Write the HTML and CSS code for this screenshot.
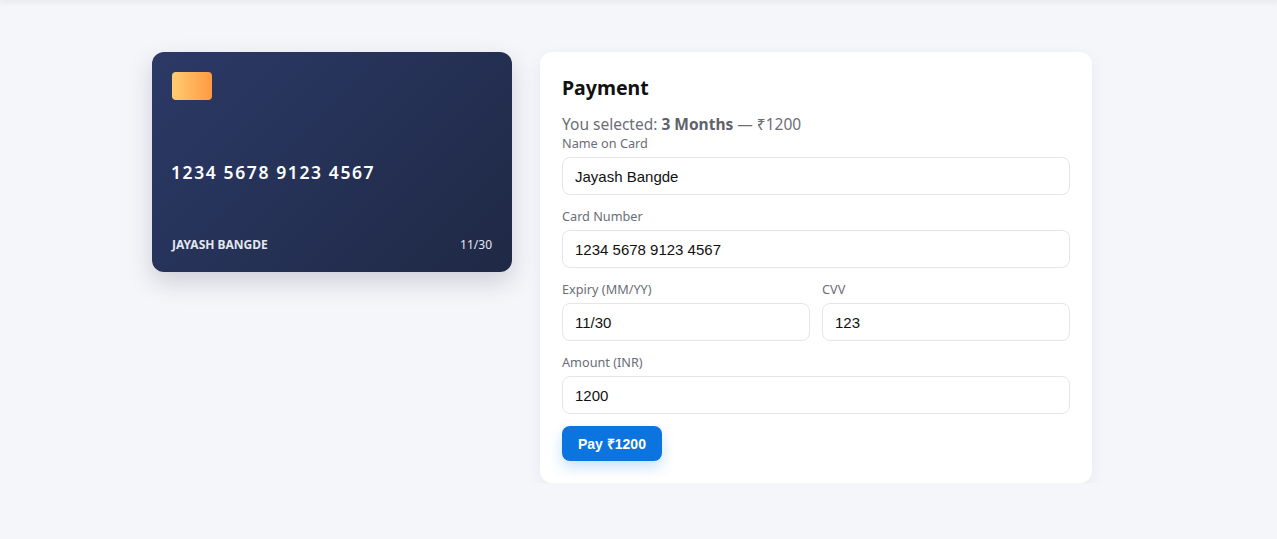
FILE: index.html
```html
<!DOCTYPE html>
<html lang="en">
<head>
<meta charset="utf-8">
<title>Payment</title>
<link rel="stylesheet" href="styles.css">
</head>
<body>
<div class="topbar"></div>
<main class="layout">
  <div class="card">
    <div class="chip"></div>
    <div class="card-number">1234 5678 9123 4567</div>
    <div class="card-bottom">
      <span class="card-name">JAYASH BANGDE</span>
      <span class="card-exp">11/30</span>
    </div>
  </div>
  <form class="panel">
    <h2 class="title">Payment</h2>
    <p class="selected">You selected: <strong>3 Months</strong> — ₹1200</p>
    <div class="field">
      <label class="label">Name on Card</label>
      <input class="input" value="Jayash Bangde">
    </div>
    <div class="field">
      <label class="label">Card Number</label>
      <input class="input" value="1234 5678 9123 4567">
    </div>
    <div class="row">
      <div class="field">
        <label class="label">Expiry (MM/YY)</label>
        <input class="input" value="11/30">
      </div>
      <div class="field">
        <label class="label">CVV</label>
        <input class="input" value="123">
      </div>
    </div>
    <div class="field">
      <label class="label">Amount (INR)</label>
      <input class="input" value="1200">
    </div>
    <button type="button" class="pay">Pay ₹1200</button>
  </form>
</main>
</body>
</html>
```

FILE: styles.css
```css
html, body {
  margin: 0;
  padding: 0;
  background: #f5f6fa;
  font-family: "Noto Sans", "Open Sans", sans-serif;
}
.topbar {
  height: 0;
  box-shadow: 0 0 6px 1px rgba(40, 40, 70, 0.18);
}
.layout {
  display: flex;
  align-items: flex-start;
  gap: 28px;
  padding: 52px 0 0 152px;
}
.card {
  width: 360px;
  height: 220px;
  box-sizing: border-box;
  padding: 20px 20px 20px 19px;
  border-radius: 12px;
  background: linear-gradient(135deg, #2b3966 0%, #1f2945 100%);
  color: #fff;
  display: flex;
  flex-direction: column;
  box-shadow: 0 10px 24px rgba(31, 41, 69, 0.18);
}
.chip {
  width: 40px;
  height: 28px;
  margin-left: 1px;
  border-radius: 4px;
  background: linear-gradient(90deg, #ffcc70, #ff9a44);
}
.card-number {
  margin-top: 60px;
  font-size: 17.5px;
  font-weight: 600;
  letter-spacing: 1.6px;
  line-height: 24px;
}
.card-bottom {
  margin-top: auto;
  display: flex;
  justify-content: space-between;
  align-items: center;
  font-size: 12px;
  line-height: 16px;
  color: #e3e7f2;
  margin-bottom: -1px;
}
.card-name {
  font-weight: 700;
  padding-left: 1px;
}
.panel {
  width: 552px;
  box-sizing: border-box;
  padding: 22px;
  background: #fff;
  border-radius: 12px;
  box-shadow: 0 4px 16px rgba(30, 40, 80, 0.06);
}
.title {
  margin: 0;
  font-size: 19.5px;
  line-height: 28px;
  font-weight: 700;
  color: #111;
}
.selected {
  margin: 11px 0 0;
  font-size: 15.5px;
  line-height: 22px;
  color: #6b6e78;
}
.selected strong {
  color: #5f626c;
}
.field {
  display: flex;
  flex-direction: column;
  gap: 5px;
  margin-bottom: 13px;
}
.label {
  font-size: 12.7px;
  line-height: 17px;
  color: #6b6e78;
}
.input {
  height: 38px;
  box-sizing: border-box;
  border: 1px solid #e4e6ee;
  border-radius: 8px;
  padding: 0 12px;
  font-family: "Liberation Sans", Arial, sans-serif;
  font-size: 15px;
  color: #111;
  background: #fff;
  outline: none;
}
.row {
  display: grid;
  grid-template-columns: 1fr 1fr;
  gap: 12px;
}
.pay {
  margin-top: -1px;
  height: 35px;
  padding: 0 16px;
  border: none;
  border-radius: 8px;
  background: #0b74de;
  color: #fff;
  font-family: "Liberation Sans", Arial, sans-serif;
  font-size: 14px;
  font-weight: 700;
  box-shadow: 0 6px 14px rgba(11, 116, 222, 0.22);
}
```
